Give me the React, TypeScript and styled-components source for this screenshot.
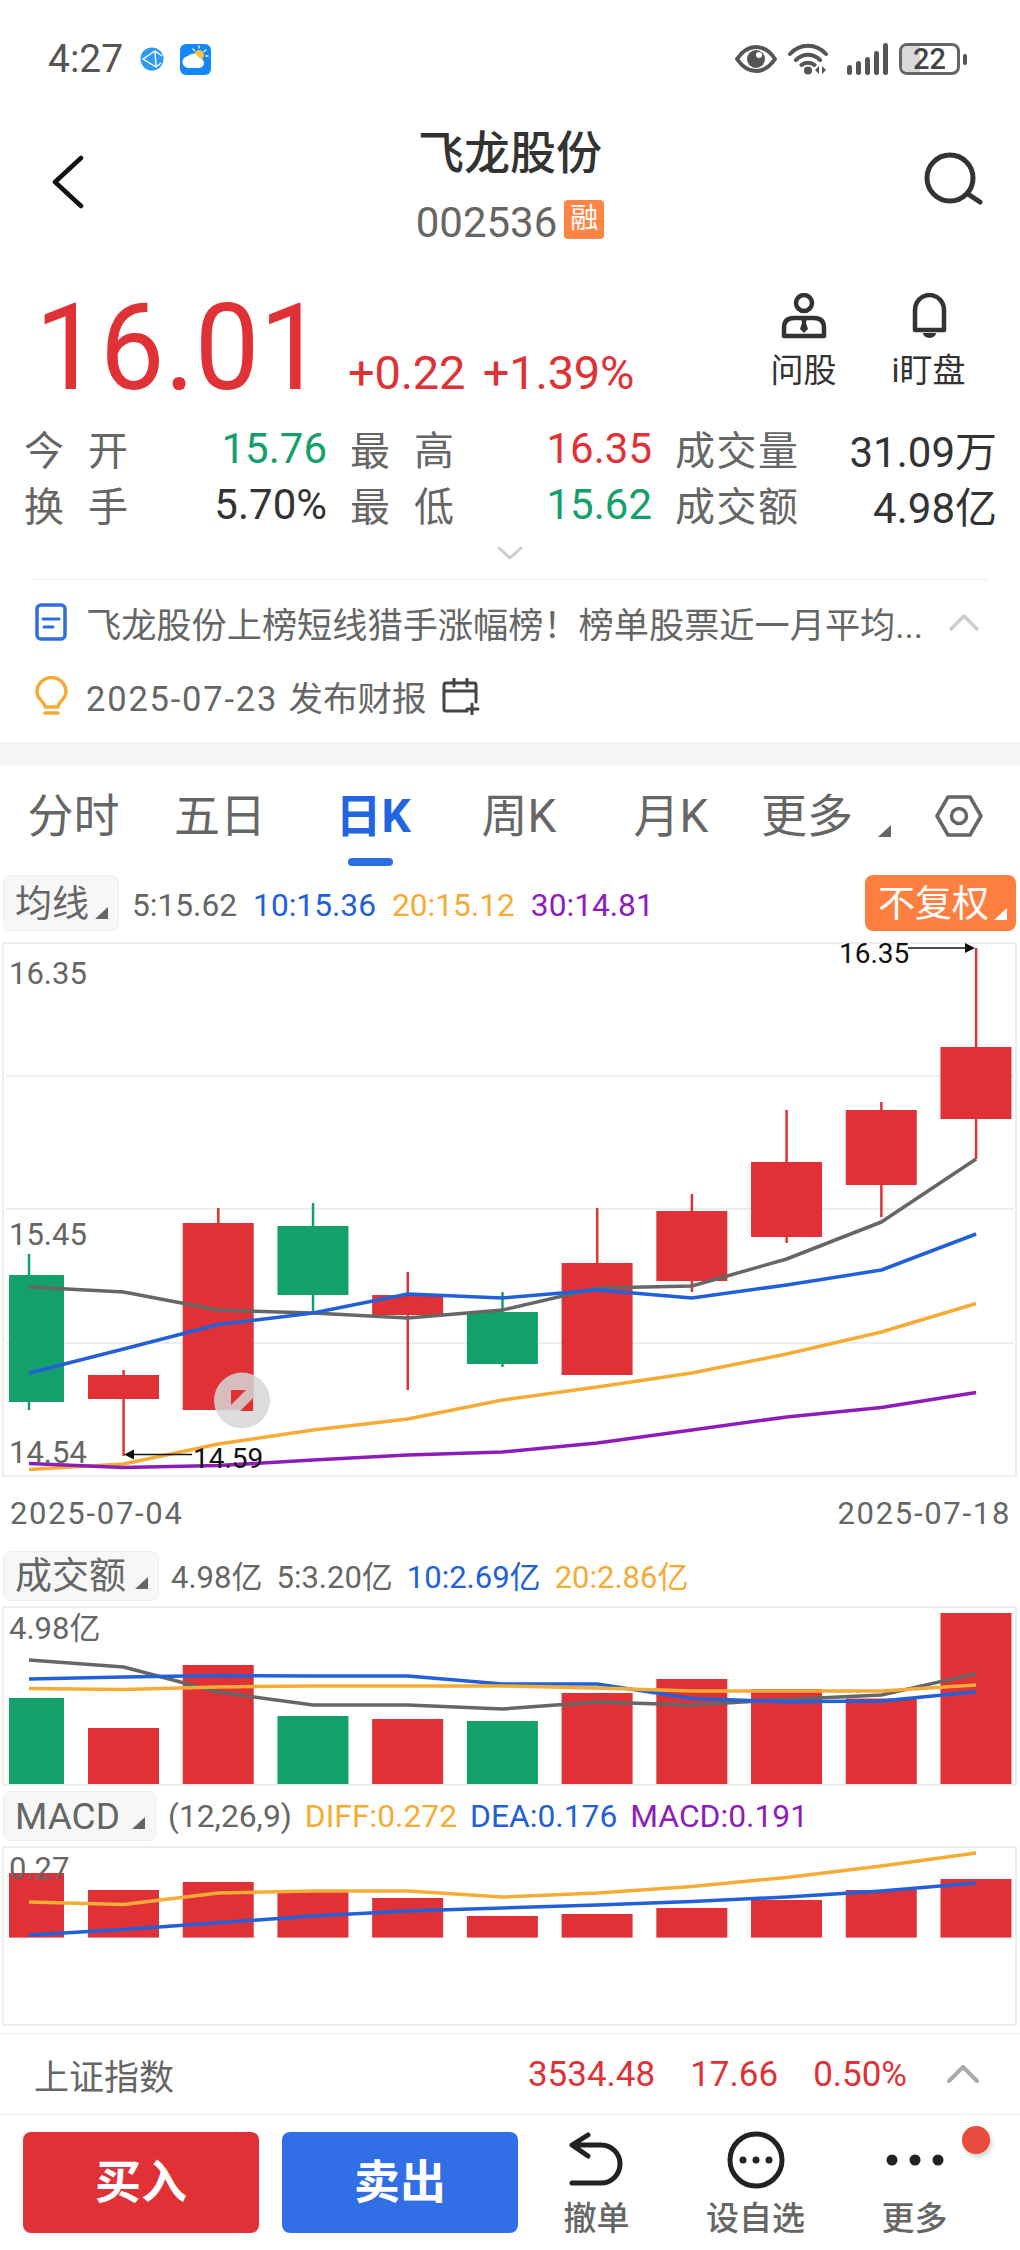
import React from "react";
import styled, { createGlobalStyle } from "styled-components";

const RED = "#E03136";
const GREEN = "#13A06A";
const BLUE = "#2260D8";
const ORANGE = "#F5AC36";
const PURPLE = "#8E1DB8";
const GRAY = "#666666";
const FONT = `Roboto, "Noto Sans CJK SC", sans-serif`;

const Global = createGlobalStyle`
  html, body { margin: 0; padding: 0; background: #fff; }
  body { font-family: ${FONT}; }
  * { box-sizing: border-box; }
`;

const Page = styled.div`
  width: 1020px;
  height: 2250px;
  overflow: hidden;
  display: flex;
  flex-direction: column;
  background: #fff;
  color: #333;
`;

/* status bar */
const StatusBar = styled.div`
  height: 100px;
  padding: 18px 53px 0 48px;
  display: flex;
  align-items: center;
`;
const Time = styled.span`
  font-size: 39px;
  color: #555;
  width: 92px;
`;
const StatusIcons = styled.div`
  margin-left: auto;
  display: flex;
  align-items: center;
  gap: 11px;
`;
const Battery = styled.div`
  position: relative;
  width: 61px;
  height: 32px;
  border: 3px solid #666;
  border-radius: 8px;
  font-size: 29px;
  font-weight: 500;
  line-height: 27px;
  text-align: center;
  color: #444;
  overflow: hidden;
  &::before {
    content: "";
    position: absolute;
    inset: 0 auto 0 0;
    width: 18px;
    background: #d9d9d9;
    z-index: 0;
  }
`;
const BatteryText = styled.span`
  position: relative;
`;
const BatteryNub = styled.div`
  width: 4px;
  height: 11px;
  border-radius: 2px;
  background: #555;
  margin-left: -8px;
`;

/* header */
const Header = styled.div`
  height: 170px;
  display: grid;
  grid-template-columns: 1fr auto 1fr;
  align-items: center;
`;
const BackBtn = styled.div`
  padding-left: 50px;
  margin-top: -7px;
  display: flex;
`;
const SearchBtn = styled.div`
  justify-self: end;
  padding-right: 36px;
  margin-top: -10px;
  display: flex;
`;
const TitleCol = styled.div`
  align-self: stretch;
  padding-top: 23px;
  display: flex;
  flex-direction: column;
  align-items: center;
`;
const Title = styled.div`
  font-size: 46px;
  line-height: 60px;
  font-weight: 500;
  color: #333;
`;
const CodeRow = styled.div`
  margin-top: 16px;
  height: 46px;
  display: flex;
  align-items: center;
  gap: 7px;
`;
const Code = styled.span`
  font-size: 42px;
  color: #666;
`;
const Badge = styled.span`
  width: 40px;
  height: 39px;
  border-radius: 4px;
  background: #ff8547;
  color: #fff;
  font-size: 28px;
  line-height: 38px;
  text-align: center;
  margin-top: -5px;
`;

/* quote */
const Quote = styled.div`
  height: 130px;
  padding-top: 13px;
  padding-left: 35px;
  display: flex;
  align-items: baseline;
`;
const Price = styled.div`
  width: 313px;
  font-size: 120px;
  line-height: 130px;
  color: ${RED};
  transform: scaleX(0.96);
  transform-origin: left center;
`;
const Change = styled.div`
  font-size: 47px;
  color: ${RED};
  word-spacing: 6px;
  letter-spacing: -0.2px;
`;
const QuoteActions = styled.div`
  margin-left: auto;
  padding-right: 29px;
  align-self: flex-start;
  margin-top: 10px;
  display: flex;
`;
const QuoteAction = styled.div`
  width: 125px;
  display: flex;
  flex-direction: column;
  align-items: center;
`;
const QuoteActionLabel = styled.div`
  margin-top: 14px;
  font-size: 33px;
  line-height: 36px;
  color: #333;
`;

/* stats */
const Stats = styled.div`
  margin-top: 20px;
  padding-left: 24px;
  display: grid;
  grid-template-columns: 303px 302px 322px;
  column-gap: 23px;
  grid-auto-rows: 56px;
`;
const Stat = styled.div`
  display: flex;
  justify-content: space-between;
  align-items: center;
`;
const StatLabel = styled.span`
  font-size: 40px;
  color: ${GRAY};
  letter-spacing: 1.5px;
  word-spacing: 11px;
`;
const StatValue = styled.span<{ $c?: string }>`
  font-size: 42px;
  color: ${(p) => p.$c || "#333"};
`;
const ExpandRow = styled.div`
  height: 47px;
  padding-top: 14px;
  display: flex;
  justify-content: center;
`;
const Divider = styled.div`
  height: 1px;
  margin: 0 32px 5px;
  background: #eeeeee;
`;

/* news */
const InfoRow = styled.div`
  height: 74px;
  padding: 0 41px 0 35px;
  display: flex;
  align-items: center;
  color: ${GRAY};
`;
const InfoIcon = styled.div`
  flex: none;
  width: 51px;
  display: flex;
`;
const InfoText = styled.span<{ $small?: boolean }>`
  font-size: ${(p) => (p.$small ? 34.5 : 35.2)}px;
  white-space: nowrap;
`;
const InfoDate = styled.span`
  letter-spacing: 1.8px;
`;
const Spacer = styled.div`
  flex: 1;
`;
const CalendarWrap = styled.div`
  margin-left: 15px;
  display: flex;
`;
const GrayBand = styled.div`
  margin-top: 9px;
  height: 23px;
  background: #f5f5f5;
`;

/* tabs */
const Tabs = styled.div`
  height: 110px;
  padding-top: 19px;
  display: flex;
  align-items: flex-start;
`;
const Tab = styled.div<{ $w: number; $on?: boolean }>`
  position: relative;
  width: ${(p) => p.$w}px;
  height: 64px;
  line-height: 64px;
  text-align: center;
  font-size: 46px;
  font-weight: ${(p) => (p.$on ? 700 : 400)};
  color: ${(p) => (p.$on ? "#2166E0" : GRAY)};
  ${(p) =>
    p.$on
      ? `&::after {
    content: "";
    position: absolute;
    left: 55px;
    top: 74px;
    width: 45px;
    height: 8px;
    border-radius: 4px;
    background: #2F6DE6;
  }`
      : ""}
`;
const Corner = styled.span<{ $c?: string }>`
  display: block;
  flex: none;
  width: 0;
  height: 0;
  border-left: 13px solid transparent;
  border-bottom: 12px solid ${(p) => p.$c || "#666"};
`;
const TabMore = styled.div`
  display: flex;
  align-items: flex-end;
  margin-left: 21px;
  height: 53px;
`;
const HexBtn = styled.div`
  margin-left: auto;
  padding-right: 37px;
  margin-top: 10px;
  display: flex;
`;

/* indicator toolbars */
const Toolbar = styled.div<{ $h: number; $mb: number }>`
  height: ${(p) => p.$h}px;
  margin-bottom: ${(p) => p.$mb}px;
  padding: 0 4px 0 3px;
  display: flex;
  align-items: center;
`;
const Selector = styled.div<{ $w: number }>`
  width: ${(p) => p.$w}px;
  height: 100%;
  padding: 0 10px 11px 11px;
  background: #f7f7f7;
  border: 1px solid #eee;
  border-radius: 8px;
  display: flex;
  align-items: flex-end;
  justify-content: space-between;
  font-size: 37px;
  color: ${GRAY};
`;
const SelectorText = styled.span<{ $dy?: number }>`
  align-self: center;
  margin-bottom: -11px;
  margin-top: ${(p) => p.$dy || 0}px;
  line-height: 1;
`;
const Values = styled.div<{ $ml: number; $gap: number; $size: number; $dy?: number }>`
  margin-left: ${(p) => p.$ml}px;
  margin-top: ${(p) => p.$dy || 0}px;
  display: flex;
  gap: ${(p) => p.$gap}px;
  font-size: ${(p) => p.$size}px;
`;
const Val = styled.span<{ $c: string }>`
  color: ${(p) => p.$c};
  white-space: nowrap;
`;
const OrangeBtn = styled.div`
  margin-left: auto;
  width: 151px;
  height: 100%;
  border-radius: 8px;
  background: #ff7f41;
  color: #fff;
  padding: 0 9px 11px 13px;
  display: flex;
  align-items: flex-end;
  justify-content: space-between;
  font-size: 37px;
`;

/* charts */
const ChartSvg = styled.svg<{ $mb?: number }>`
  display: block;
  flex: none;
  width: 1020px;
  overflow: visible;
  margin-bottom: ${(p) => p.$mb || 0}px;
`;
const ChartText = styled.text<{ $black?: boolean }>`
  font-family: ${FONT};
  font-size: ${(p) => (p.$black ? 28 : 31)}px;
  fill: ${(p) => (p.$black ? "#111" : GRAY)};
`;
const DateRow = styled.div`
  height: 74px;
  padding: 0 9px 2px 10px;
  display: flex;
  align-items: center;
  justify-content: space-between;
  font-size: 31px;
  letter-spacing: 1.7px;
  color: ${GRAY};
`;

/* index */
const IndexRow = styled.div`
  height: 82px;
  padding: 0 41px 0 34px;
  border-top: 1px solid #eee;
  border-bottom: 1px solid #eee;
  display: flex;
  align-items: center;
  font-size: 35px;
`;
const IndexName = styled.span`
  color: ${GRAY};
`;
const IndexVals = styled.div`
  margin-left: auto;
  display: flex;
  gap: 35px;
  color: ${RED};
`;
const IndexChevron = styled.div`
  margin-left: 40px;
  display: flex;
`;

/* bottom */
const BottomBar = styled.div`
  padding: 17px 0 0 23px;
  display: flex;
  align-items: flex-start;
  gap: 23px;
`;
const TradeBtn = styled.div<{ $c: string }>`
  width: 236px;
  height: 101px;
  border-radius: 8px;
  background: ${(p) => p.$c};
  color: #fff;
  font-size: 46px;
  font-weight: 700;
  line-height: 101px;
  text-align: center;
`;
const BottomActions = styled.div`
  margin-left: -24px;
  display: flex;
`;
const BottomAction = styled.div`
  position: relative;
  width: 159px;
  margin-top: -5px;
  display: flex;
  flex-direction: column;
  align-items: center;
`;
const BottomIcon = styled.div`
  height: 66px;
  display: flex;
  align-items: center;
  justify-content: center;
`;
const BottomLabel = styled.div`
  margin-top: 6px;
  font-size: 33px;
  line-height: 40px;
  font-weight: 500;
  color: ${GRAY};
`;
const RedDot = styled.span`
  position: absolute;
  top: -1px;
  left: 127px;
  width: 28px;
  height: 28px;
  border-radius: 50%;
  background: #e74c3c;
  box-shadow: 2px 3px 4px rgba(0, 0, 0, 0.18);
`;

/* data */
const STEP = 94.72;
const cx = (i: number) => (i === 0 ? 29 : 123.6 + (i - 1) * STEP);
const bodyX = (i: number) => (i === 0 ? 9 : 88 + (i - 1) * STEP);
const bodyW = (i: number) => (i === 0 ? 55 : 71);

type Candle = { c: string; w: [number, number]; b: [number, number] };
const CANDLES: Candle[] = [
  { c: GREEN, w: [1254, 1410], b: [1275, 1402] },
  { c: RED, w: [1370, 1456], b: [1375, 1399] },
  { c: RED, w: [1208, 1410], b: [1223, 1410] },
  { c: GREEN, w: [1203, 1313], b: [1226, 1295] },
  { c: RED, w: [1272, 1390], b: [1295, 1315] },
  { c: GREEN, w: [1292, 1367], b: [1312, 1364] },
  { c: RED, w: [1208, 1375], b: [1263, 1375] },
  { c: RED, w: [1194, 1292], b: [1211, 1281] },
  { c: RED, w: [1110, 1243], b: [1162, 1237] },
  { c: RED, w: [1102, 1217], b: [1110, 1185] },
  { c: RED, w: [948, 1159], b: [1047, 1119] },
];
const MA5 = [1287, 1292, 1310, 1313, 1318, 1310, 1288, 1286, 1259, 1222, 1159];
const MA10 = [1373, 1349, 1324.5, 1313, 1294, 1298, 1290, 1298, 1285, 1270, 1234];
const MA20 = [1469.5, 1464, 1444, 1430, 1419, 1400, 1387, 1373, 1354, 1332, 1303.5];
const MA30 = [1463.6, 1467.5, 1465.6, 1460, 1455, 1452, 1443, 1430, 1417, 1407.5, 1392.5];

const VOL_TOPS = [1698, 1728, 1665, 1716, 1719, 1721, 1693, 1679, 1689, 1698.5, 1613];
const VOL_COLORS = [GREEN, RED, RED, GREEN, RED, GREEN, RED, RED, RED, RED, RED];
const VOL5 = [1660, 1667, 1692, 1705, 1705, 1709, 1702, 1705, 1699.4, 1695, 1673.6];
const VOL10 = [1679, 1677, 1675.4, 1676, 1676, 1684, 1684, 1698.5, 1701.7, 1701, 1691.7];
const VOL20 = [1688.5, 1689.5, 1687, 1686, 1686, 1686, 1688, 1691, 1691, 1691, 1685];

const MACD_TOPS = [1873, 1890, 1882, 1890, 1898, 1916, 1914, 1908, 1900, 1890, 1879];
const DIFF = [1902, 1904.6, 1893, 1891, 1891, 1897, 1893, 1886.5, 1877.4, 1866, 1853];
const DEA = [1935, 1929.5, 1922.7, 1916, 1911, 1908, 1905, 1901.4, 1897, 1891, 1883];

const Line = ({ ys, c, w = 3.5 }: { ys: number[]; c: string; w?: number }) => (
  <polyline
    points={ys.map((y, i) => `${cx(i)},${y}`).join(" ")}
    fill="none"
    stroke={c}
    strokeWidth={w}
    strokeLinejoin="round"
  />
);

const Frame = ({ top, h }: { top: number; h: number }) => (
  <rect x={3} y={top} width={1013} height={h} fill="none" stroke="#eeeeee" strokeWidth={2} />
);

const Bars = ({ tops, bottom, colors }: { tops: number[]; bottom: number; colors?: string[] }) => (
  <>
    {tops.map((t, i) => (
      <rect key={i} x={bodyX(i)} y={t} width={bodyW(i)} height={bottom - t} fill={colors ? colors[i] : RED} />
    ))}
  </>
);

const Chevron = ({ up, c, w, h, sw = 3 }: { up?: boolean; c: string; w: number; h: number; sw?: number }) => (
  <svg width={w} height={h} viewBox={`0 0 ${w} ${h}`}>
    <polyline
      points={up ? `2,${h - 2} ${w / 2},2 ${w - 2},${h - 2}` : `2,2 ${w / 2},${h - 2} ${w - 2},2`}
      fill="none"
      stroke={c}
      strokeWidth={sw}
      strokeLinecap="round"
      strokeLinejoin="round"
    />
  </svg>
);

export default function App() {
  return (
    <Page>
      <Global />
      <StatusBar>
        <Time>4:27</Time>
        <svg width="24" height="24" viewBox="0 0 24 24" style={{ marginRight: 16 }}>
          <circle cx="12" cy="12" r="11.5" fill="#2E9BF0" />
          <path d="M3 12 L15 4 L16 20 Z M15 4 L22 9 M16 20 L21 16" fill="none" stroke="#fff" strokeWidth="1.4" />
        </svg>
        <svg width="31" height="31" viewBox="0 0 31 31">
          <rect width="31" height="31" rx="6" fill="#1488FA" />
          <circle cx="19" cy="11" r="5" fill="#F7C23C" />
          <path d="M19 2v2M26 6l-2 1.5M28 12h-2M13 5l1.5 1.5" stroke="#F2F6FA" strokeWidth="1.4" strokeLinecap="round" />
          <path d="M9 24 a6 6 0 0 1 -1 -12 a6.5 6.5 0 0 1 11 2 a5 5 0 0 1 5 5 a5 5 0 0 1 -5 5 Z" fill="#fff" />
        </svg>
        <StatusIcons>
          <svg width="42" height="28" viewBox="0 0 42 28">
            <path d="M2 14 C8 5 14 2 21 2 C28 2 34 5 40 14 C34 23 28 26 21 26 C14 26 8 23 2 14 Z" fill="none" stroke="#555" strokeWidth="4" strokeLinejoin="round" />
            <circle cx="21" cy="14" r="9" fill="#555" />
            <circle cx="24" cy="10" r="3" fill="#fff" />
          </svg>
          <svg width="48" height="32" viewBox="0 0 48 32">
            <path d="M2 11 C12 0 28 0 38 11 M8 17 C15 10 25 10 32 17 M13.500 22 C17 19 23 19 26.500 22" fill="none" stroke="#555" strokeWidth="4" strokeLinecap="round" />
            <circle cx="20" cy="27.500" r="4" fill="#555" />
            <path d="M31 23v8l-4 -4zM34 23v8l4 -4z" fill="#555" />
          </svg>
          <svg width="41" height="32" viewBox="0 0 41 32">
            <rect x="0" y="22" width="5" height="10" rx="2.500" fill="#555" />
            <rect x="9" y="18" width="5" height="14" rx="2.500" fill="#555" />
            <rect x="18" y="14" width="5" height="18" rx="2.500" fill="#555" />
            <rect x="27" y="8" width="5" height="24" rx="2.500" fill="#555" />
            <rect x="36" y="0" width="5" height="32" rx="2.500" fill="#555" />
          </svg>
          <Battery>
            <BatteryText>22</BatteryText>
          </Battery>
          <BatteryNub />
        </StatusIcons>
      </StatusBar>

      <Header>
        <BackBtn>
          <svg width="36" height="54" viewBox="0 0 36 54">
            <polyline points="31,3 5,27 31,51" fill="none" stroke="#111" strokeWidth="4.5" strokeLinecap="round" strokeLinejoin="round" />
          </svg>
        </BackBtn>
        <TitleCol>
          <Title>飞龙股份</Title>
          <CodeRow>
            <Code>002536</Code>
            <Badge>融</Badge>
          </CodeRow>
        </TitleCol>
        <SearchBtn>
          <svg width="60" height="56" viewBox="0 0 60 56">
            <circle cx="26" cy="26" r="23" fill="none" stroke="#333" strokeWidth="5" />
            <line x1="44" y1="42" x2="56" y2="50" stroke="#333" strokeWidth="5" strokeLinecap="round" />
          </svg>
        </SearchBtn>
      </Header>

      <Quote>
        <Price>16.01</Price>
        <Change>+0.22 +1.39%</Change>
        <QuoteActions>
          <QuoteAction>
            <svg width="46" height="46" viewBox="779 292 46 46">
              <circle cx="802" cy="302" r="8" fill="none" stroke="#333" strokeWidth="4.5" />
              <path d="M782 335 V327 Q782 317 792 317 H812 Q822 317 822 327 V335 Z" fill="none" stroke="#333" strokeWidth="4.5" strokeLinejoin="round" />
              <path d="M799 317 H805 L804 322 L806 328 L802 332 L798 328 L800 322 Z" fill="#333" />
            </svg>
            <QuoteActionLabel>问股</QuoteActionLabel>
          </QuoteAction>
          <QuoteAction>
            <svg width="46" height="46" viewBox="905 292 46 46">
              <path d="M914 329 V309 A14.500 15 0 0 1 943 309 V329 Z" fill="none" stroke="#333" strokeWidth="4.5" strokeLinejoin="round" />
              <path d="M922 332 H935 A6.500 5 0 0 1 922 332 Z" fill="#333" />
            </svg>
            <QuoteActionLabel>i盯盘</QuoteActionLabel>
          </QuoteAction>
        </QuoteActions>
      </Quote>

      <Stats>
        <Stat>
          <StatLabel>今 开</StatLabel>
          <StatValue $c={GREEN}>15.76</StatValue>
        </Stat>
        <Stat>
          <StatLabel>最 高</StatLabel>
          <StatValue $c={RED}>16.35</StatValue>
        </Stat>
        <Stat>
          <StatLabel>成交量</StatLabel>
          <StatValue>31.09万</StatValue>
        </Stat>
        <Stat>
          <StatLabel>换 手</StatLabel>
          <StatValue>5.70%</StatValue>
        </Stat>
        <Stat>
          <StatLabel>最 低</StatLabel>
          <StatValue $c={GREEN}>15.62</StatValue>
        </Stat>
        <Stat>
          <StatLabel>成交额</StatLabel>
          <StatValue>4.98亿</StatValue>
        </Stat>
      </Stats>

      <ExpandRow>
        <Chevron c="#cccccc" w={26} h={14} />
      </ExpandRow>
      <Divider />

      <InfoRow>
        <InfoIcon>
          <svg width="32" height="38" viewBox="0 0 32 38">
            <rect x="2" y="2" width="28" height="34" rx="4" fill="none" stroke="#2F6DE0" strokeWidth="3.5" />
            <path d="M8 16 H24 M9 24 H18" stroke="#2F6DE0" strokeWidth="3" strokeLinecap="round" />
          </svg>
        </InfoIcon>
        <InfoText>飞龙股份上榜短线猎手涨幅榜！榜单股票近一月平均...</InfoText>
        <Spacer />
        <Chevron up c="#cccccc" w={30} h={17} sw={3.5} />
      </InfoRow>
      <InfoRow>
        <InfoIcon>
          <svg width="33" height="40" viewBox="0 0 33 40">
            <path d="M10 31 C10 26 2 23 2 16 A14.500 14.500 0 0 1 31 16 C31 23 23 26 23 31 Z" fill="none" stroke={ORANGE} strokeWidth="3.5" strokeLinejoin="round" />
            <path d="M10 37 H23" stroke={ORANGE} strokeWidth="3.5" strokeLinecap="round" />
          </svg>
        </InfoIcon>
        <InfoText $small>
          <InfoDate>2025-07-23 </InfoDate>发布财报
        </InfoText>
        <CalendarWrap>
          <svg width="38" height="37" viewBox="0 0 38 37">
            <path d="M25 33 H4 Q2 33 2 31 V7 Q2 5 4 5 H32 Q34 5 34 7 V24 M2 13 H34 M12 1 V8 M25 1 V8 M30 26 V36 M25 31 H36" fill="none" stroke="#444" strokeWidth="3" strokeLinecap="round" />
          </svg>
        </CalendarWrap>
      </InfoRow>
      <GrayBand />

      <Tabs>
        <Tab $w={147}>分时</Tab>
        <Tab $w={146}>五日</Tab>
        <Tab $w={160} $on>
          日K
        </Tab>
        <Tab $w={132}>周K</Tab>
        <Tab $w={172}>月K</Tab>
        <Tab $w={100}>更多</Tab>
        <TabMore>
          <Corner />
        </TabMore>
        <HexBtn>
          <svg width="48" height="44" viewBox="0 0 48 44">
            <polygon points="13,3 35,3 46,22 35,41 13,41 2,22" fill="none" stroke="#666" strokeWidth="3.5" strokeLinejoin="round" />
            <circle cx="24" cy="22" r="7.500" fill="none" stroke="#666" strokeWidth="3.5" />
          </svg>
        </HexBtn>
      </Tabs>

      <Toolbar $h={56} $mb={11}>
        <Selector $w={116}>
          <SelectorText $dy={3}>均线</SelectorText>
          <Corner />
        </Selector>
        <Values $ml={13} $gap={16} $size={31.7} $dy={4}>
          <Val $c={GRAY}>5:15.62</Val>
          <Val $c={BLUE}>10:15.36</Val>
          <Val $c={ORANGE}>20:15.12</Val>
          <Val $c={PURPLE}>30:14.81</Val>
        </Values>
        <OrangeBtn>
          <SelectorText $dy={3}>不复权</SelectorText>
          <Corner $c="#fff" />
        </OrangeBtn>
      </Toolbar>

      <ChartSvg viewBox="0 942 1020 535" height={535}>
        <Frame top={943} h={533} />
        <path d="M6 1076 H1014 M6 1209 H1014 M6 1343 H1014" stroke="#eeeeee" strokeWidth="2" />
        {CANDLES.map((k, i) => (
          <g key={i}>
            <line x1={cx(i)} x2={cx(i)} y1={k.w[0]} y2={k.w[1]} stroke={k.c} strokeWidth="2.500" />
            <rect x={bodyX(i)} y={k.b[0]} width={bodyW(i)} height={k.b[1] - k.b[0]} fill={k.c} />
          </g>
        ))}
        <Line ys={MA20} c={ORANGE} />
        <Line ys={MA30} c={PURPLE} />
        <Line ys={MA5} c={GRAY} />
        <Line ys={MA10} c={BLUE} />
        <ChartText x={9} y={984}>16.35</ChartText>
        <ChartText x={9} y={1245}>15.45</ChartText>
        <ChartText x={9} y={1463}>14.54</ChartText>
        <ChartText $black x={839} y={963}>16.35</ChartText>
        <path d="M908 948 H966" stroke="#111" strokeWidth="1.5" />
        <path d="M965 943 L975 948 L965 953 Z" fill="#111" />
        <ChartText $black x={193} y={1468}>14.59</ChartText>
        <path d="M192 1454.500 H133" stroke="#111" strokeWidth="1.5" />
        <path d="M134 1449.500 L124 1454.500 L134 1459.500 Z" fill="#111" />
        <circle cx="242" cy="1400.500" r="28" fill="#d6d6d6" fillOpacity="0.85" />
        <path d="M231 1390 H246 L231 1405 Z M253 1398 V1411 H240 Z" fill={RED} />
      </ChartSvg>

      <DateRow>
        <span>2025-07-04</span>
        <span>2025-07-18</span>
      </DateRow>

      <Toolbar $h={50} $mb={5}>
        <Selector $w={156}>
          <SelectorText>成交额</SelectorText>
          <Corner />
        </Selector>
        <Values $ml={12} $gap={14} $size={31} $dy={-3}>
          <Val $c={GRAY}>4.98亿</Val>
          <Val $c={GRAY}>5:3.20亿</Val>
          <Val $c={BLUE}>10:2.69亿</Val>
          <Val $c={ORANGE}>20:2.86亿</Val>
        </Values>
      </Toolbar>

      <ChartSvg viewBox="0 1606 1020 180" height={180} $mb={5}>
        <Frame top={1607} h={178} />
        <Bars tops={VOL_TOPS} bottom={1784} colors={VOL_COLORS} />
        <Line ys={VOL5} c={GRAY} />
        <Line ys={VOL10} c={BLUE} />
        <Line ys={VOL20} c={ORANGE} />
        <ChartText x={9} y={1639}>4.98亿</ChartText>
      </ChartSvg>

      <Toolbar $h={50} $mb={5}>
        <Selector $w={153}>
          <SelectorText>MACD</SelectorText>
          <Corner />
        </Selector>
        <Values $ml={12} $gap={13} $size={31.8}>
          <Val $c={GRAY}>(12,26,9)</Val>
          <Val $c={ORANGE}>DIFF:0.272</Val>
          <Val $c={BLUE}>DEA:0.176</Val>
          <Val $c={PURPLE}>MACD:0.191</Val>
        </Values>
      </Toolbar>

      <ChartSvg viewBox="0 1846 1020 180" height={180} $mb={7}>
        <Frame top={1847} h={178} />
        <Bars tops={MACD_TOPS} bottom={1937.6} />
        <Line ys={DIFF} c={ORANGE} />
        <Line ys={DEA} c={BLUE} />
        <ChartText x={9} y={1879}>0.27</ChartText>
      </ChartSvg>

      <IndexRow>
        <IndexName>上证指数</IndexName>
        <IndexVals>
          <span>3534.48</span>
          <span>17.66</span>
          <span>0.50%</span>
        </IndexVals>
        <IndexChevron>
          <Chevron up c="#aaaaaa" w={32} h={18} sw={4} />
        </IndexChevron>
      </IndexRow>

      <BottomBar>
        <TradeBtn $c={RED}>买入</TradeBtn>
        <TradeBtn $c="#326FE6">卖出</TradeBtn>
        <BottomActions>
          <BottomAction>
            <BottomIcon>
              <svg width="60" height="56" viewBox="569 2129 60 56">
                <path d="M590 2132 L574 2142 L590 2153 M574 2142 H603 A19 19 0 0 1 603 2180 H574" fill="none" stroke="#222" strokeWidth="5" strokeLinecap="round" strokeLinejoin="round" />
              </svg>
            </BottomIcon>
            <BottomLabel>撤单</BottomLabel>
          </BottomAction>
          <BottomAction>
            <BottomIcon>
              <svg width="58" height="58" viewBox="0 0 58 58">
                <circle cx="29" cy="29" r="26" fill="none" stroke="#222" strokeWidth="5" />
                <circle cx="16" cy="29" r="3.500" fill="#222" />
                <circle cx="29" cy="29" r="3.500" fill="#222" />
                <circle cx="42" cy="29" r="3.500" fill="#222" />
              </svg>
            </BottomIcon>
            <BottomLabel>设自选</BottomLabel>
          </BottomAction>
          <BottomAction>
            <BottomIcon>
              <svg width="58" height="14" viewBox="0 0 58 14">
                <circle cx="6" cy="7" r="5.500" fill="#222" />
                <circle cx="29" cy="7" r="5.500" fill="#222" />
                <circle cx="52" cy="7" r="5.500" fill="#222" />
              </svg>
            </BottomIcon>
            <BottomLabel>更多</BottomLabel>
            <RedDot />
          </BottomAction>
        </BottomActions>
      </BottomBar>
    </Page>
  );
}
